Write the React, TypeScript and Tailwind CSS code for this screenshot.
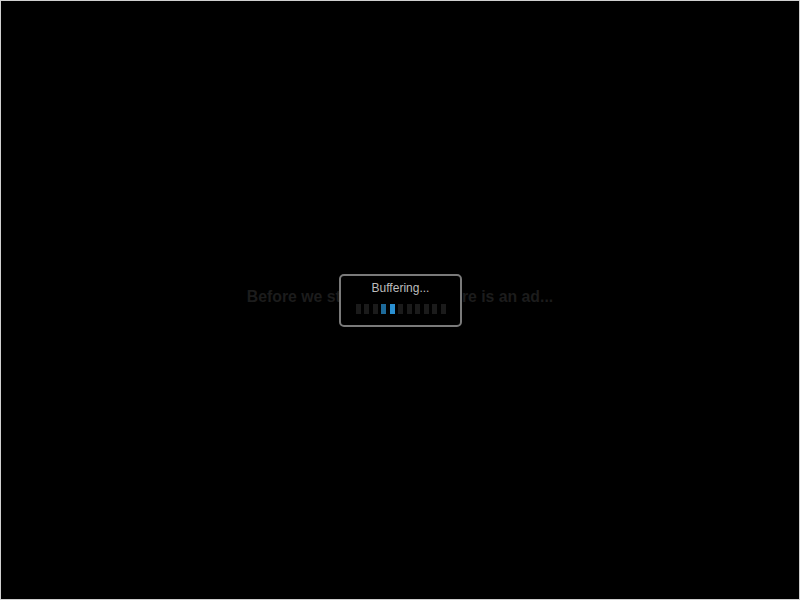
import React from 'react';

const bars = Array.from({ length: 11 }, (_, i) => i);

const App: React.FC = () => {
  return (
    <div className="w-[800px] h-[600px] bg-black border border-[#d0d0d0] flex items-center justify-center relative" style={{ fontFamily: '"Liberation Sans", Arial, sans-serif' }}>
      <p className="text-[15.8px] font-bold text-[#1c1c1c] mt-[-6px]">Before we start the game, here is an ad...</p>

      {/* buffering popup */}
      <div className="absolute left-[338px] top-[273px] w-[123px] h-[53px] bg-black border-2 border-[#7a7a7a] rounded-[5px] flex flex-col items-center">
        <span className="text-[12px] text-[#bdbdbd] leading-none mt-[6px]">Buffering...</span>
        <div className="flex gap-[3.5px] mt-[10px]">
          {bars.map(i => (
            <div
              key={i}
              className={`w-[5px] h-[10px] ${i === 3 ? 'bg-[#1d6a9a]' : i === 4 ? 'bg-[#2a90d2]' : 'bg-[#1b1b1b]'}`}
            />
          ))}
        </div>
      </div>
    </div>
  );
};

export default App;
